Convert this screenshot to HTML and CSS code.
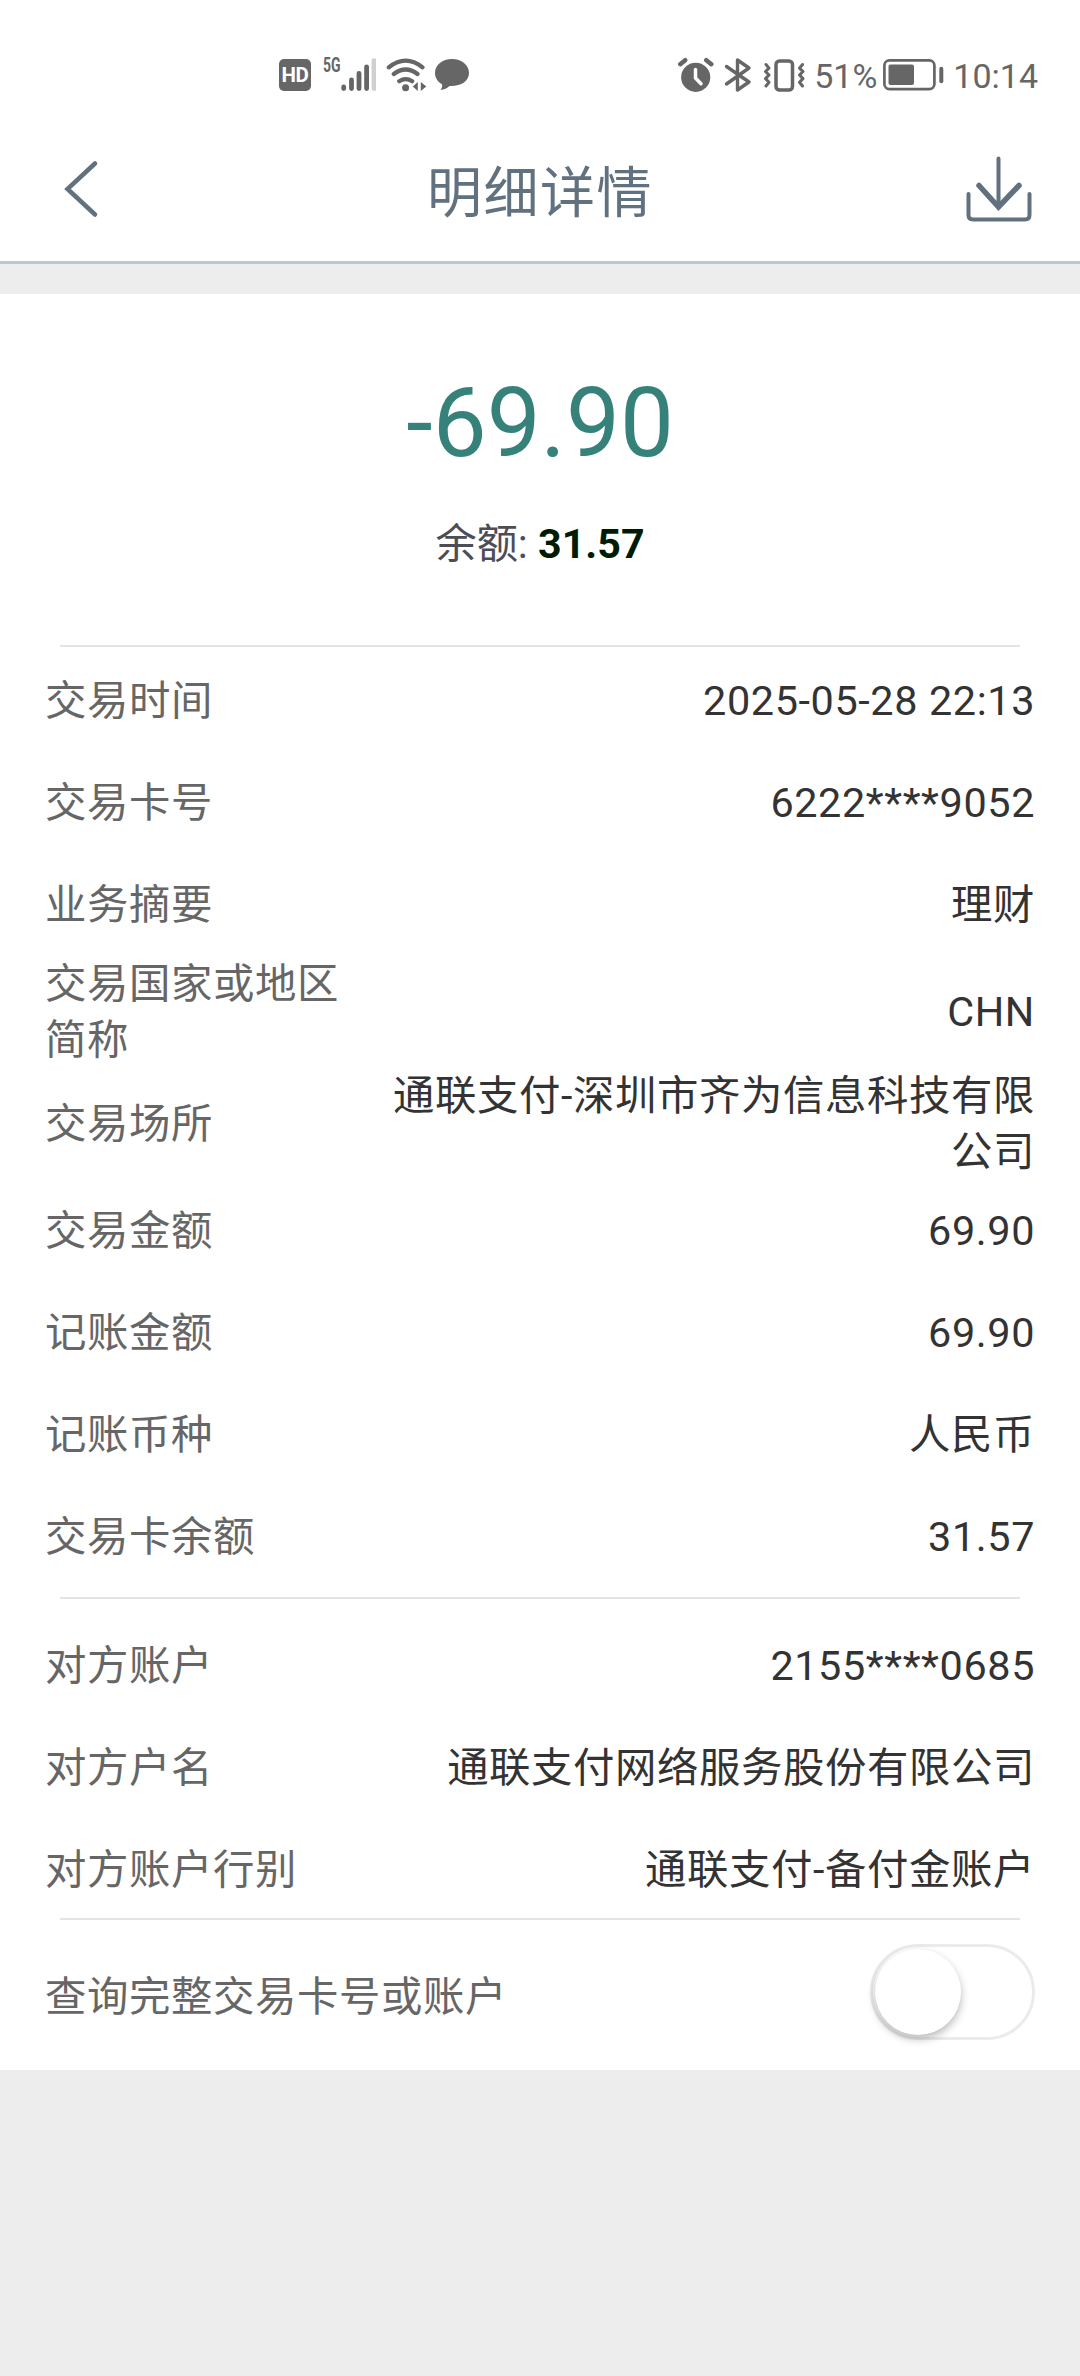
FILE: index.html
```html
<!DOCTYPE html>
<html lang="zh-CN">
<head>
<meta charset="utf-8">
<title>明细详情</title>
<link rel="stylesheet" href="styles.css">
</head>
<body>
<div class="status">
  <div class="status-left">
    <span class="hd">HD</span>
    <span class="net">5G</span>
    <svg class="signal" width="35" height="34" viewBox="0 0 35 34" stroke-width="4.8" stroke-linecap="round" stroke="#666">
      <path d="M2.700 29v1.600M10.500 22v8.600M18 15.500v15.100M25.600 8.800v21.800"/><path d="M33 2.600v28" stroke="#d0d0d0"/>
    </svg>
    <svg class="wifi" width="41" height="35" viewBox="0 0 41 35" fill="none" stroke="#666" stroke-width="4.200" stroke-linecap="round">
      <path d="M2.800 9.300Q19.700 -4 36.500 9.300M7.800 16Q19.700 7 31.500 16M13.200 23.200Q19.700 19 26.200 23.200"/>
      <circle cx="19.600" cy="29.700" r="3.500" fill="#666" stroke="none"/>
      <path d="M31.800 24v9l-5-4.500zM34.800 24v9l5.500-4.500z" fill="#666" stroke="none"/>
    </svg>
    <svg width="36" height="34" viewBox="0 0 36 34"><path d="M18 1C8.500 1 1 7 1 15c0 5 2.800 8.800 7 11.200.6 2-.2 4-1.500 5.800 3.500-.4 6.800-1.800 9-4C27 28.500 35 23 35 15S27.500 1 18 1z" fill="#666"/></svg>
  </div>
  <div class="status-right">
    <svg width="36" height="36" viewBox="0 0 36 36" fill="none" stroke-linecap="round"><circle cx="17.700" cy="20.300" r="14.600" fill="#666"/><path d="M2.300 7.200L7.200 3.200M28.300 3.200l5 4" stroke="#666" stroke-width="4.500"/><path d="M17.500 12.500v8.500l5.500 5.700" stroke="#fff" stroke-width="3.500"/></svg>
    <svg class="bt" width="28" height="36" viewBox="0 0 28 36" fill="none" stroke="#666" stroke-width="3.400" stroke-linejoin="round" stroke-linecap="round"><path d="M2.500 9.500L25 25 13.500 33V3L25 11 2.500 27"/></svg>
    <svg class="vib" width="42" height="36" viewBox="0 0 42 36" fill="none" stroke="#666" stroke-linejoin="round" stroke-linecap="round"><rect x="13" y="4" width="16.500" height="29" rx="3.500" stroke-width="3.500"/><path d="M3 7.500l3 3.600-3.500 3.400L6 18l-3.500 3.600L6 25.300 3 29M39.500 7.500l-3 3.600 3.500 3.400-3.500 3.500 3.500 3.600-3.500 3.700 3 3.700" stroke-width="3"/></svg>
    <span class="pct">51%</span>
    <svg class="battery" width="62" height="32" viewBox="0 0 62 32"><rect x="1.400" y="1.400" width="50" height="28.700" rx="5" fill="none" stroke="#666" stroke-width="2.700"/><rect x="5.500" y="5.500" width="25.500" height="20.500" rx="2" fill="#666"/><rect x="56.300" y="7.700" width="4" height="16.500" rx="2" fill="#666"/></svg>
    <span class="clock">10:14</span>
  </div>
</div>
<header class="nav">
  <svg class="back" width="36" height="60" viewBox="0 0 36 60" fill="none" stroke="#61717f" stroke-width="4.500" stroke-linecap="round" stroke-linejoin="miter"><path d="M31 4.500L3.500 30 31 55.500"/></svg>
  <h1>明细详情</h1>
  <svg class="save" width="68" height="68" viewBox="0 0 68 68" fill="none" stroke="#61717f" stroke-linecap="round"><path d="M3.500 38v21q0 4.500 4.500 4.500h52q4.500 0 4.500-4.500V38M33.500 2.500V50" stroke-width="4"/><path d="M14 29.500L33.500 51 54 29.500" stroke-width="5.500"/></svg>
</header>
<main class="sheet">
  <section class="summary">
    <div class="amount">-69.90</div>
    <div class="balance">余额: <b>31.57</b></div>
  </section>
  <dl class="rows first">
    <div class="row"><dt>交易时间</dt><dd>2025-05-28 22:13</dd></div>
    <div class="row"><dt>交易卡号</dt><dd>6222****9052</dd></div>
    <div class="row"><dt>业务摘要</dt><dd>理财</dd></div>
    <div class="row"><dt>交易国家或地区简称</dt><dd>CHN</dd></div>
    <div class="row"><dt>交易场所</dt><dd>通联支付-深圳市齐为信息科技有限公司</dd></div>
    <div class="row"><dt>交易金额</dt><dd>69.90</dd></div>
    <div class="row"><dt>记账金额</dt><dd>69.90</dd></div>
    <div class="row"><dt>记账币种</dt><dd>人民币</dd></div>
    <div class="row"><dt>交易卡余额</dt><dd>31.57</dd></div>
  </dl>
  <dl class="rows second">
    <div class="row"><dt>对方账户</dt><dd>2155****0685</dd></div>
    <div class="row"><dt>对方户名</dt><dd>通联支付网络服务股份有限公司</dd></div>
    <div class="row"><dt>对方账户行别</dt><dd>通联支付-备付金账户</dd></div>
  </dl>
  <div class="full">
    <span>查询完整交易卡号或账户</span>
    <span class="toggle" role="switch" aria-checked="false"><i class="knob"></i></span>
  </div>
</main>
</body>
</html>
```
FILE: styles.css
```css
* { box-sizing: border-box; }
body {
  margin: 0;
  min-height: 2376px;
  background: #ededed;
  font-family: Roboto, "Noto Sans CJK SC", sans-serif;
  color: #333;
}
svg { display: block; flex: none; }
.status {
  height: 130px;
  padding: 56px 42px 0 279px;
  background: #fff;
  display: flex;
  justify-content: space-between;
  color: #666;
}
.status-left, .status-right {
  display: flex;
  height: 38px;
  align-items: center;
}
.hd {
  width: 32px;
  height: 32px;
  border-radius: 5px;
  background: #666;
  color: #fff;
  font-size: 20.5px;
  font-weight: 700;
  line-height: 32px;
  text-align: center;
  letter-spacing: -0.5px;
}
.net {
  width: 18px;
  margin-left: 12px;
  align-self: flex-start;
  font: 700 20px/19px Roboto, sans-serif;
  transform: scaleX(0.7);
  transform-origin: left;
}
.wifi { margin-left: 10px; }
.status-left > :last-child { margin-left: 7px; }
.bt { margin-left: 10px; }
.vib { margin-left: 11px; }
.pct, .clock { font-size: 34px; line-height: 38px; padding-top: 1px; }
.pct { margin-left: 9px; }
.battery { margin-left: 6px; }
.clock { margin-left: 8px; }
.nav {
  height: 134px;
  padding: 26px 47px 0 64px;
  background: #fff;
  border-bottom: 3px solid #b6c9cc;
  display: flex;
  justify-content: space-between;
}
.back { margin-top: 3px; }
.nav h1 {
  margin: 1px 0 0 15px;
  font-size: 55px;
  letter-spacing: 1.5px;
  font-weight: 400;
  line-height: 72px;
  color: #61717f;
}
.sheet {
  margin-top: 30px;
  height: 1776px;
  background: #fff;
}
.summary {
  height: 351px;
  padding-top: 73px;
  text-align: center;
}
.amount {
  font-size: 96px;
  line-height: 112px;
  color: #36827b;
}
.balance {
  margin-top: 37px;
  font-size: 41.2px;
  line-height: 56px;
  color: #4d4d55;
}
.balance b { color: #001c00; font-weight: 700; }
.rows { margin: 0; padding: 0 45px; }
.rows::before, .full::before {
  content: "";
  display: block;
  height: 2px;
  margin: 0 15px;
  background: #e4e4e4;
}
.first { height: 952px; }
.first::before { margin-bottom: 3px; }
.second { height: 321px; }
.second::before { margin-bottom: 16px; }
.row {
  min-height: 102px;
  display: flex;
  align-items: center;
  justify-content: space-between;
  font-size: 41.4px;
  letter-spacing: 0.6px;
  line-height: 56px;
}
.row dt { width: 300px; color: #666; }
.row dd { margin: 0; width: 646px; text-align: right; }
.full {
  height: 152px;
  padding: 0 45px;
}
.full > span:first-child {
  float: left;
  margin-top: 49px;
  font-size: 41.4px;
  letter-spacing: 0.6px;
  line-height: 56px;
  color: #666;
}
.toggle {
  float: right;
  width: 165px;
  height: 96px;
  margin-top: 24px;
  padding: 2px;
  border: 3px solid #ebebeb;
  border-radius: 48px;
}
.knob {
  display: block;
  width: 86px;
  height: 86px;
  border-radius: 50%;
  background: #fff;
  box-shadow: 0 4px 9px rgba(0, 0, 0, 0.28);
}
```
